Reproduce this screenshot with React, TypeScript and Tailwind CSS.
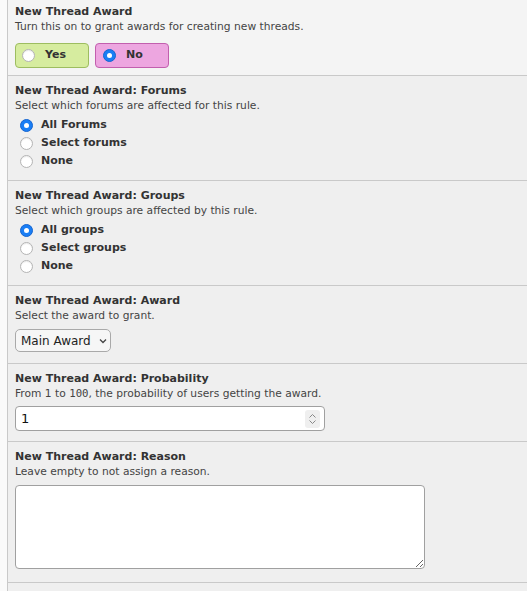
import { useState } from 'react';

const FONT = { fontFamily: '"DejaVu Sans", Verdana, sans-serif' };

function Radio({ checked }: { checked: boolean }) {
  if (checked) {
    return (
      <span className="w-[13px] h-[13px] rounded-full bg-[#1a7ef5] border border-[#1565d0] flex items-center justify-center flex-shrink-0">
        <span className="w-[5px] h-[5px] rounded-full bg-white" />
      </span>
    );
  }
  return <span className="w-[13px] h-[13px] rounded-full bg-white border border-[#b4b4b4] flex-shrink-0 shadow-[inset_0_1px_1px_rgba(0,0,0,0.08)]" />;
}

function Row({ title, desc, children, first }: { title: string; desc: React.ReactNode; children: React.ReactNode; first?: boolean }) {
  return (
    <div className={`border-b border-[#c9c9c9] pl-[7px] ${first ? 'pt-[4px] bg-[#f4f4f4]' : 'pt-[7px] bg-[#efefef]'}`}>
      <div className="text-[11px] font-bold text-[#333] leading-[15px]">{title}</div>
      <div className="text-[10.7px] text-[#444] leading-[15px]">{desc}</div>
      {children}
    </div>
  );
}

function RadioList({ options, value, onChange }: { options: string[]; value: number; onChange: (i: number) => void }) {
  return (
    <div className="pt-[3px] pb-[10px] pl-[5px]">
      {options.map((o, i) => (
        <div key={o} className="flex items-center gap-[8px] h-[18px] cursor-pointer" onClick={() => onChange(i)}>
          <Radio checked={value === i} />
          <span className="text-[11px] font-bold text-[#333]">{o}</span>
        </div>
      ))}
    </div>
  );
}

export default function App() {
  const [onOff, setOnOff] = useState(false);
  const [forums, setForums] = useState(0);
  const [groups, setGroups] = useState(0);

  return (
    <div className="w-[527px] h-[591px] bg-[#fafafa] overflow-hidden" style={FONT}>
      <div className="ml-[7px] border-l border-[#c9c9c9] h-full bg-[#efefef]">
        <Row first title="New Thread Award" desc="Turn this on to grant awards for creating new threads.">
          <div className="flex gap-[6px] pt-[9px] pb-[7px]">
            <div
              className="w-[74px] h-[25px] rounded-[4px] border border-[#9dbd60] bg-[#d6ec9f] flex items-center pl-[6px] gap-[10px] cursor-pointer"
              onClick={() => setOnOff(true)}
            >
              <Radio checked={onOff} />
              <span className="text-[11px] font-bold text-[#333]">Yes</span>
            </div>
            <div
              className="w-[74px] h-[25px] rounded-[4px] border border-[#c25fae] bg-[#eda6e0] flex items-center pl-[7px] gap-[10px] cursor-pointer"
              onClick={() => setOnOff(false)}
            >
              <Radio checked={!onOff} />
              <span className="text-[11px] font-bold text-[#333]">No</span>
            </div>
          </div>
        </Row>

        <Row title="New Thread Award: Forums" desc="Select which forums are affected for this rule.">
          <RadioList options={['All Forums', 'Select forums', 'None']} value={forums} onChange={setForums} />
        </Row>

        <Row title="New Thread Award: Groups" desc="Select which groups are affected by this rule.">
          <RadioList options={['All groups', 'Select groups', 'None']} value={groups} onChange={setGroups} />
        </Row>

        <Row title="New Thread Award: Award" desc="Select the award to grant.">
          <div className="pt-[6px] pb-[11px]">
            <div className="w-[96px] h-[23px] rounded-[5px] border border-[#a9a9a9] bg-[#f6f6f6] flex items-center pl-[5px] gap-[8px] text-[12px] text-[#222]">
              <span>Main Award</span>
              <svg width="8" height="6" viewBox="0 0 8 6">
                <path d="M1 1.5 L4 4.5 L7 1.5" fill="none" stroke="#444" strokeWidth="1.3" />
              </svg>
            </div>
          </div>
        </Row>

        <Row
          title="New Thread Award: Probability"
          desc={
            <>
              From 1 to <span style={{ fontFamily: '"DejaVu Sans Mono", monospace' }}>100</span>, the probability of users getting the award.
            </>
          }
        >
          <div className="pt-[5px] pb-[10px]">
            <div className="w-[310px] h-[25px] rounded-[4px] border border-[#a0a0a0] bg-white flex items-center pl-[5px] pr-[4px] justify-between">
              <span className="text-[13px] text-[#111]">1</span>
              <span className="w-[15px] h-[18px] rounded-[3px] bg-[#efefef] flex flex-col items-center justify-center gap-[2px]">
                <svg width="7" height="4" viewBox="0 0 7 4">
                  <path d="M0.5 3.5 L3.5 0.5 L6.5 3.5" fill="none" stroke="#888" strokeWidth="1" />
                </svg>
                <svg width="7" height="4" viewBox="0 0 7 4">
                  <path d="M0.5 0.5 L3.5 3.5 L6.5 0.5" fill="none" stroke="#888" strokeWidth="1" />
                </svg>
              </span>
            </div>
          </div>
        </Row>

        <Row title="New Thread Award: Reason" desc="Leave empty to not assign a reason.">
          <div className="pt-[6px] pb-[13px]">
            <textarea className="w-[410px] h-[84px] rounded-[4px] border border-[#a0a0a0] bg-white block outline-none" />
          </div>
        </Row>
      </div>
    </div>
  );
}
